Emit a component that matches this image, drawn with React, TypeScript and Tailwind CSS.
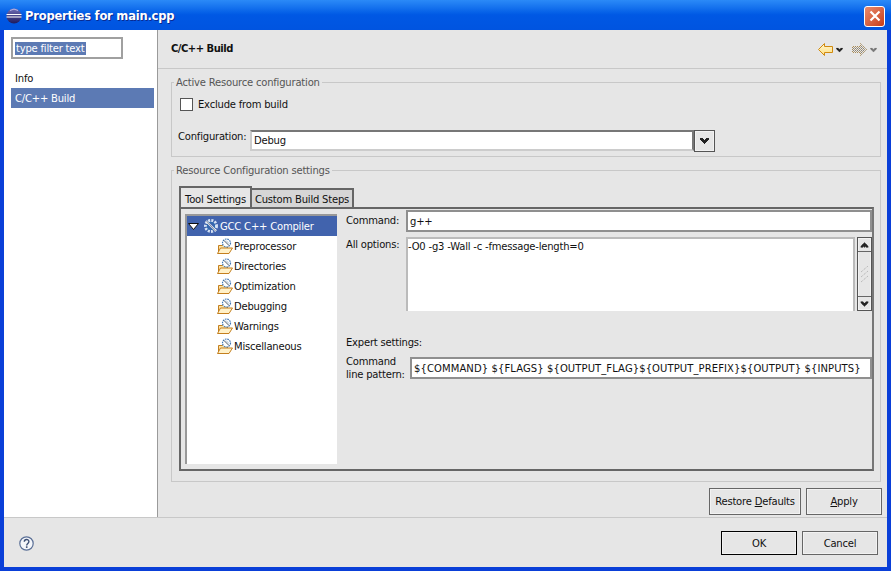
import React from 'react';

const font = { fontFamily: '"DejaVu Sans", sans-serif' };

const Caret: React.FC<{ className?: string; up?: boolean }> = ({ className = '', up }) => (
    <svg width="9" height="6" viewBox="0 0 9 6" className={className}>
        <path d={up ? 'M4 0h1v1h1v1h1v1h1v1h1v2H6V5H5v1H4V5H3v1H0V4h1V3h1V2h1V1h1z' : 'M0 0h3v1h1v1h1V1h1V0h3v2H8v1H7v1H6v1H5v1H4V5H3V4H2V3H1V2H0z'} fill="currentColor" />
    </svg>
);

const EclipseIcon = () => (
    <svg width="16" height="16" viewBox="0 0 16 16">
        <defs>
            <linearGradient id="ecl" x1="0" y1="0" x2="0" y2="1">
                <stop offset="0" stopColor="#6f6db5" />
                <stop offset="1" stopColor="#1d1a5e" />
            </linearGradient>
        </defs>
        <circle cx="8" cy="8" r="7.5" fill="url(#ecl)" />
        <path d="M0.5 6.5h15M0.5 9h15" stroke="#fff" strokeWidth="1.1" />
        <path d="M4 2.5a7 7 0 0 1 8 0" stroke="#b8b6e6" fill="none" />
    </svg>
);

const ToolIcon = () => (
    <svg width="16" height="16" viewBox="0 0 16 16" className="shrink-0">
        <circle cx="8" cy="8" r="5.5" fill="none" stroke="#d5e3f5" strokeWidth="3" strokeDasharray="2 1.2" />
        <circle cx="8" cy="8" r="3.4" fill="none" stroke="#2f6db0" strokeWidth="1.4" />
        <path d="M3 3l10 10" stroke="#e9eef7" strokeWidth="1.8" />
        <path d="M3.5 3l9 10" stroke="#53606f" strokeWidth="0.7" />
    </svg>
);

const FolderToolIcon = () => (
    <svg width="16" height="17" viewBox="0 0 16 17" className="shrink-0">
        <path d="M1.5 7.5h4l1-1h4v9h-9z" fill="#fbe3a6" stroke="#c47f1e" />
        <path d="M0.5 15.5l3-5.5h12l-3.5 5.5z" fill="#fff1c9" stroke="#c47f1e" />
        <circle cx="9.5" cy="5" r="4" fill="#fff" stroke="#3f77b5" strokeWidth="1.2" strokeDasharray="1.6 0.8" />
        <path d="M7 2.5l5 5" stroke="#4a5563" strokeWidth="1" />
        <path d="M9 2.5l3 3" stroke="#9db9d9" strokeWidth="1" />
    </svg>
);

const NavArrow: React.FC<{ back?: boolean }> = ({ back }) => (
    <svg width="15" height="13" viewBox="0 0 15 13">
        <defs>
            <pattern id="chk" width="2" height="2" patternUnits="userSpaceOnUse">
                <rect width="2" height="2" fill="#e6e6e6" />
                <rect width="1" height="1" fill="#a99a80" />
                <rect x="1" y="1" width="1" height="1" fill="#8a8478" />
            </pattern>
            <linearGradient id="bk" x1="0" y1="0" x2="0" y2="1">
                <stop offset="0" stopColor="#fff6cf" />
                <stop offset="1" stopColor="#ffdf80" />
            </linearGradient>
        </defs>
        {back ? (
            <path d="M0.5 6.5L6.5 0.5v3h8v6h-8v3z" fill="url(#bk)" stroke="#d08a10" />
        ) : (
            <path d="M14.5 6.5L8.5 0.5v3h-8v6h8v3z" fill="url(#chk)" stroke="#a98b55" strokeDasharray="1 1" />
        )}
    </svg>
);

const Button: React.FC<{ className: string; dark?: boolean; children: React.ReactNode }> = ({ className, dark, children }) => (
    <button className={`${className} bg-[#e6e6e6] border shadow-[inset_0_0_0_1px_#f2f2f2] whitespace-nowrap text-[10px] tracking-[-0.2px] text-[#111] ${dark ? 'border-black' : 'border-[#666]'}`}>
        {children}
    </button>
);

const items = ['Preprocessor', 'Directories', 'Optimization', 'Debugging', 'Warnings', 'Miscellaneous'];

export default function App() {
    return (
        <div style={font} className="w-[891px] h-[571px] flex flex-col bg-[#0a3fd8] overflow-hidden text-[10px] tracking-[-0.2px] leading-[13px] text-[#111]">
            {/* Title bar */}
            <div className="h-[30px] shrink-0 flex items-center pt-[2px] pl-[6px] pr-[6px] bg-gradient-to-b from-[#2b8af7] via-[#0058e4] to-[#0054e0]">
                <EclipseIcon />
                <span className="ml-[3px] mt-px text-[11.5px] font-bold text-white [text-shadow:1px_1px_0_#0a2a90]">Properties for main.cpp</span>
                <div className="ml-auto w-[21px] h-[21px] rounded-[3px] border border-white bg-gradient-to-br from-[#e98a6c] to-[#c53a12] flex items-center justify-center">
                    <svg width="12" height="12" viewBox="0 0 12 12">
                        <path d="M1.5 1.5l9 9M10.5 1.5l-9 9" stroke="#fff" strokeWidth="2.2" />
                    </svg>
                </div>
            </div>

            <div className="flex-1 mx-[4px] mb-[4px] flex flex-col bg-[#e6e6e6]">
                <div className="flex h-[487px]">
                    {/* Sidebar */}
                    <div className="w-[154px] shrink-0 bg-white border-r border-[#9a9a9a] pl-[7px] pr-[3px] pt-[7px]">
                        <div className="w-[112px] h-[22px] border-2 border-[#a0a0a0] flex items-center pl-[2px]">
                            <span className="bg-[#5c7ab4] text-white px-px">type filter text</span>
                        </div>
                        <div className="mt-[10px] h-[19px] pl-[4px] flex items-center">Info</div>
                        <div className="h-[20px] bg-[#5c7ab4] text-white pl-[4px] flex items-center">C/C++ Build</div>
                    </div>

                    {/* Main pane */}
                    <div className="flex-1 min-w-0 flex flex-col">
                        <div className="h-[39px] shrink-0 border-b border-[#c8c8c8] flex items-center pl-[13px] pr-[9px]">
                            <span className="font-bold text-[#111] tracking-[-0.5px] -mt-[1px]">C/C++ Build</span>
                            <div className="ml-auto flex items-center mt-[1px]">
                                <NavArrow back />
                                <Caret className="ml-[2px] scale-75 text-[#222]" />
                                <span className="w-[8px]" />
                                <NavArrow />
                                <Caret className="ml-[2px] scale-75 text-[#777]" />
                            </div>
                        </div>

                        <div className="flex-1 min-w-0 pl-[13px] pr-[6px] pt-[7px] flex flex-col">
                            <fieldset className="min-w-0 h-[81px] border border-[#c8c8c8] pl-[8px] pr-[5px]">
                                <legend className="-ml-[6px] px-[2px] text-[#555]">Active Resource configuration</legend>
                                <label className="flex items-center gap-[5px] mt-[7px] h-[16px]">
                                    <span className="w-[13px] h-[13px] bg-white border border-[#555]" />
                                    Exclude from build
                                </label>
                                <div className="flex items-center mt-[17px] h-[23px] -ml-[2px]">
                                    <span className="w-[72px] shrink-0 -mt-[8px]">Configuration:</span>
                                    <div className="w-[444px] h-[21px] bg-white border-2 border-t-[#777] border-l-[#ccc] border-r-[#777] border-b-[#ccc] flex items-center pl-[2px]">Debug</div>
                                    <div className="w-[21px] h-[22px] border border-[#555] shadow-[inset_0_0_0_1px_#f2f2f2] flex items-center justify-center text-[#222]">
                                        <Caret />
                                    </div>
                                </div>
                            </fieldset>

                            <fieldset className="min-w-0 mt-[7px] h-[318px] border border-[#c8c8c8] pl-[7px] pr-[6px] flex flex-col">
                                <legend className="-ml-[5px] px-[2px] text-[#555]">Resource Configuration settings</legend>

                                {/* Tabs */}
                                <div className="flex items-end h-[22px] mt-[9px] whitespace-nowrap">
                                    <div className="w-[73px] h-[22px] pt-[2px] border-2 border-b-0 border-[#666] bg-[#e6e6e6] flex items-center justify-center">Tool Settings</div>
                                    <div className="w-[102px] h-[20px] border-2 border-l-0 border-b-0 border-[#666] bg-[#d6d6d6] flex items-center justify-center">Custom Build Steps</div>
                                </div>
                                <div className="h-[264px] -mt-[1px] border-2 border-[#666] border-r-[#777] flex pl-[4px] pt-[5px]">
                                    {/* Tree */}
                                    <div className="w-[152px] h-[250px] shrink-0 bg-white border-t-2 border-l-2 border-[#999]">
                                        <div className="h-[20px] bg-[#4163ad] text-white flex items-center pl-[1px]">
                                            <svg width="11" height="7" viewBox="0 0 11 7">
                                                <path d="M0.5 0.5h10L5.5 6.5z" fill="#fff" stroke="#111" />
                                            </svg>
                                            <span className="ml-[4px]"><ToolIcon /></span>
                                            <span className="ml-[1px]">GCC C++ Compiler</span>
                                        </div>
                                        {items.map(item => (
                                            <div key={item} className="h-[20px] flex items-center pl-[30px]">
                                                <FolderToolIcon />
                                                <span className="ml-px">{item}</span>
                                            </div>
                                        ))}
                                    </div>

                                    {/* Options */}
                                    <div className="flex-1 min-w-0 pl-[9px] -mt-[4px]">
                                        <div className="flex h-[22px]">
                                            <span className="w-[60px] pt-[4px]">Command:</span>
                                            <div className="flex-1 bg-white border-2 border-[#8f8f8f] flex items-center pl-[2px]">g++</div>
                                        </div>
                                        <div className="flex h-[74px] mt-[5px]">
                                            <span className="w-[60px] shrink-0 pt-[1px]">All options:</span>
                                            <div className="flex-1 bg-white border-t-2 border-l-2 border-r-2 border-[#bbb] pt-[1px]">-O0 -g3 -Wall -c -fmessage-length=0</div>
                                            <div className="ml-[2px] w-[15px] border border-[#555] shadow-[inset_0_0_0_1px_#f2f2f2] flex flex-col text-[#222]">
                                                <div className="h-[14px] flex items-center justify-center border-b border-[#666]"><Caret up className="scale-90" /></div>
                                                <div className="flex-1 flex items-center justify-center">
                                                    <svg width="8" height="17" viewBox="0 0 8 17">
                                                        <path d="M0 6l7-6M0 11l7-6M0 16l7-6" stroke="#aaa" strokeDasharray="1 1" />
                                                    </svg>
                                                </div>
                                                <div className="h-[14px] flex items-center justify-center border-t border-[#666]"><Caret className="scale-90" /></div>
                                            </div>
                                        </div>
                                        <div className="mt-[25px]">Expert settings:</div>
                                        <div className="flex mt-[6px]">
                                            <span className="w-[64px] shrink-0">Command<br />line pattern:</span>
                                            <div className="flex-1 min-w-0 h-[22px] mt-[2px] bg-white border-2 border-[#8f8f8f] flex items-center pl-[2px] whitespace-nowrap tracking-[0.1px]">{'${COMMAND} ${FLAGS} ${OUTPUT_FLAG}${OUTPUT_PREFIX}${OUTPUT} ${INPUTS}'}</div>
                                        </div>
                                    </div>
                                </div>
                            </fieldset>

                            <div className="flex justify-end gap-[5px] mt-[6px] -mr-px">
                                <Button className="w-[92px] h-[27px]">Restore <span className="underline">D</span>efaults</Button>
                                <Button className="w-[76px] h-[27px]"><span className="underline">A</span>pply</Button>
                            </div>
                        </div>
                    </div>
                </div>

                {/* Footer */}
                <div className="flex-1 border-t border-[#c8c8c8] flex items-center pl-[15px] pr-[9px]">
                    <svg width="15" height="15" viewBox="0 0 15 15" className="mt-[1px]">
                        <circle cx="7.5" cy="7.5" r="6.7" fill="#f4f6fa" stroke="#5a6f96" strokeWidth="1.2" />
                        <path d="M5.3 5.8c0-3 4.6-3 4.6-.2 0 1.9-2.2 1.9-2.2 3.8" fill="none" stroke="#3d4f74" strokeWidth="1.4" />
                        <rect x="6.9" y="10.3" width="1.6" height="1.6" fill="#3d4f74" />
                    </svg>
                    <div className="ml-auto flex gap-[5px] mt-px">
                        <Button dark className="w-[76px] h-[24px]">OK</Button>
                        <Button className="w-[76px] h-[24px]">Cancel</Button>
                    </div>
                </div>
            </div>
        </div>
    );
}
